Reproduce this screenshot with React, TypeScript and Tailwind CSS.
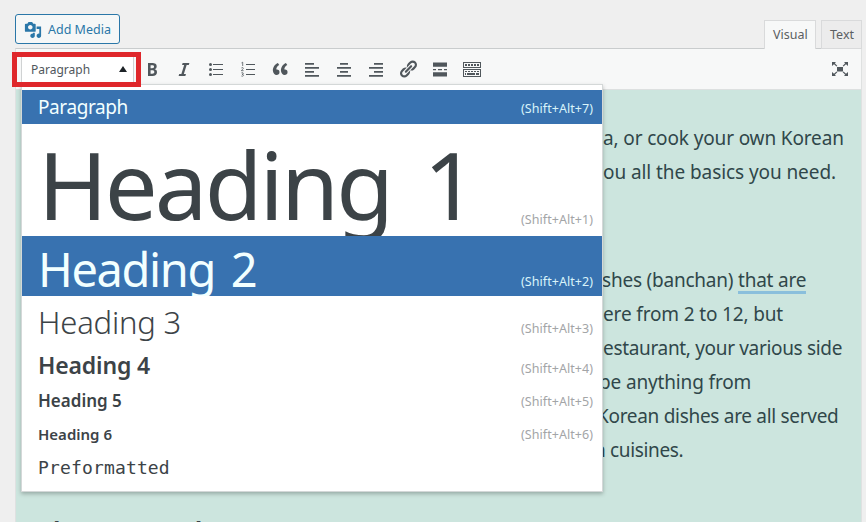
import type { ReactNode } from 'react';

interface FormatItem {
    label: string;
    shortcut?: string;
    row: string;
    text: string;
    hint: string;
    active?: boolean;
}

const formats: FormatItem[] = [
    { label: 'Paragraph', shortcut: '(Shift+Alt+7)', row: 'h-[34px]', text: 'text-[19px] leading-[34px] tracking-[-0.4px]', hint: 'pt-[10px]', active: true },
    { label: 'Heading 1', shortcut: '(Shift+Alt+1)', row: 'h-[112px]', text: 'text-[94px] leading-[120px] tracking-[-2.9px] [word-spacing:11px]', hint: 'pt-[87px]' },
    { label: 'Heading 2', shortcut: '(Shift+Alt+2)', row: 'h-[60px]', text: 'text-[47px] leading-[67px] tracking-[-1.4px] [word-spacing:5px]', hint: 'pt-[37px]', active: true },
    { label: 'Heading 3', shortcut: '(Shift+Alt+3)', row: 'h-[51px]', text: 'text-[31px] leading-[52px] font-[350] tracking-[-0.2px]', hint: 'pt-[24px]' },
    { label: 'Heading 4', shortcut: '(Shift+Alt+4)', row: 'h-[37px]', text: 'text-[23px] leading-[36px] font-semibold tracking-[-0.15px]', hint: 'pt-[13px]' },
    { label: 'Heading 5', shortcut: '(Shift+Alt+5)', row: 'h-[33px]', text: 'text-[17px] leading-[34px] font-semibold tracking-[0px]', hint: 'pt-[9px]' },
    { label: 'Heading 6', shortcut: '(Shift+Alt+6)', row: 'h-[33px]', text: 'text-[15px] leading-[34px] font-semibold tracking-[0px]', hint: 'pt-[9px]' },
    { label: 'Preformatted', row: 'h-[34px]', text: "text-[18px] leading-[35px] font-['DejaVu_Sans_Mono',monospace] tracking-[0.15px]", hint: '' },
];

const Icon = ({ children, className = 'size-5' }: { children: ReactNode; className?: string }) => (
    <svg viewBox="0 0 20 20" fill="currentColor" className={className}>{children}</svg>
);

const toolbarIcons: ReactNode[] = [
    <path d="M6 4v13h4.54c1.37 0 2.46-.33 3.26-1 .8-.66 1.2-1.58 1.2-2.77 0-.84-.17-1.51-.51-2.01s-.9-.85-1.67-1.03v-.09c.57-.1 1.02-.4 1.36-.9s.51-1.13.51-1.91c0-1.14-.39-1.98-1.17-2.5C12.75 4.26 11.5 4 9.78 4H6zm2.57 5.15V6.26h1.36c.73 0 1.27.11 1.61.32.34.22.51.58.51 1.07 0 .54-.16.92-.47 1.15s-.82.35-1.51.35h-1.5zm0 2.19h1.6c1.44 0 2.16.53 2.16 1.61 0 .6-.17 1.05-.51 1.34s-.86.43-1.57.43H8.57v-3.38z" />,
    <path d="M14.78 6h-2.13l-2.8 9h2.12l-.62 2H4.6l.62-2h2.14l2.8-9H8.03l.62-2h6.75z" />,
    <g>
        <circle cx="4.5" cy="5.5" r="1.5" />
        <circle cx="4.5" cy="10.5" r="1.5" />
        <circle cx="4.5" cy="15.5" r="1.5" />
        <path d="M7 5h10v1H7zM7 10h10v1H7zM7 15h10v1H7z" />
    </g>,
    <g>
        <path d="M8 5h9v1H8zM8 10h9v1H8zM8 15h9v1H8z" />
        <path fill="none" stroke="currentColor" strokeWidth=".8" d="M3.5 3.9l1.2-.7V7M3.4 9c.6-.7 2-.6 1.9.4 0 .8-1.9 1.5-1.9 2.3h2.2M3.4 13.9c1-.5 1.9-.2 1.9.5 0 .6-.6.9-1.2.9.8 0 1.4.3 1.4 1s-1.1 1.2-2.1.7" />
    </g>,
    <path d="M9.49 13.22c0-.74-.2-1.38-.61-1.9-.62-.78-1.83-.88-2.53-.72-.29-1.65 1.11-3.75 2.92-4.65L7.88 4c-2.73 1.3-5.42 4.28-4.96 8.05C3.21 14.43 4.59 16 6.54 16c.85 0 1.56-.25 2.12-.75s.83-1.18.83-2.03zm8.05 0c0-.74-.2-1.38-.61-1.9-.63-.78-1.83-.88-2.53-.72-.29-1.65 1.11-3.75 2.92-4.65L15.93 4c-2.73 1.3-5.41 4.28-4.95 8.05.29 2.38 1.66 3.95 3.61 3.95.85 0 1.56-.25 2.12-.75s.83-1.18.83-2.03z" />,
    <path d="M3 4h9v1.7H3zM3 8h14v1.7H3zM3 12h9v1.7H3zM3 16h14v1.7H3z" />,
    <path d="M6 4h8v1.7H6zM3 8h14v1.7H3zM6 12h8v1.7H6zM3 16h14v1.7H3z" />,
    <path d="M8 4h9v1.7H8zM3 8h14v1.7H3zM8 12h9v1.7H8zM3 16h14v1.7H3z" />,
    <path d="M17.74 2.76c1.68 1.69 1.68 4.41 0 6.1l-1.53 1.52c-1.12 1.12-2.7 1.47-4.14 1.09l2.62-2.61.76-.77.76-.76c.84-.84.84-2.2 0-3.04-.84-.85-2.2-.85-3.04 0l-.77.76-3.38 3.38c-.37-1.44-.02-3.02 1.1-4.14l1.52-1.53c1.69-1.68 4.42-1.68 6.1 0zM8.59 13.43l5.34-5.34c.42-.42.42-1.1 0-1.52-.44-.43-1.13-.39-1.53 0l-5.33 5.34c-.42.42-.42 1.1 0 1.52.44.43 1.13.39 1.52 0zm-.76 2.29l4.14-4.15c.38 1.44.03 3.02-1.09 4.14l-1.52 1.53c-1.69 1.68-4.41 1.68-6.1 0-1.68-1.68-1.68-4.42 0-6.1l1.53-1.52c1.12-1.12 2.7-1.47 4.14-1.1l-4.14 4.15c-.85.84-.85 2.2 0 3.05.84.84 2.2.84 3.04 0z" />,
    <path d="M3 3.5h14v4.3H3zM3 10h3v1.3H3zM8 10h4v1.3H8zM14 10h3v1.3h-3zM3 13.2h14v4.3H3z" />,
    <path fillRule="evenodd" d="M1 3h18v6H1zM2 4v4h16V4zM1 10h18v8H1zM2 11v6h16v-6zM3 5h2v2H3zM6 5h2v2H6zM9 5h2v2H9zM12 5h2v2h-2zM15 5h2v2h-2zM3 12h2v1H3zM6 12h2v1H6zM9 12h2v1H9zM12 12h2v1h-2zM15 12h2v1h-2zM3 14h1v2H3zM5 14h8v2H5zM14 14h3v2h-3z" />,
];

const lines = [
    { text: 'a, or cook your own Korean', box: 'mt-[31px]', cls: 'tracking-[-0.14px]' },
    { text: 'ou all the basics you need.', box: '', cls: 'tracking-[-0.08px]' },
    { text: 'shes (banchan) ', marked: 'that are', box: 'mt-[74px]', cls: '-ml-px tracking-[-0.22px]' },
    { text: 'ere from 2 to 12, but', box: '', cls: 'tracking-[-0.15px]' },
    { text: 'estaurant, your various side', box: '', cls: 'tracking-[-0.33px]' },
    { text: 'be anything from', box: '', cls: '-ml-1 tracking-[-0.15px]' },
    { text: 'Korean dishes are all served', box: '', cls: '-ml-1.5 tracking-[-0.3px]' },
    { text: 'n cuisines.', box: '', cls: '-ml-[9px] tracking-[-0.35px]' },
];

const FormatMenu = () => (
    <div className="absolute left-[21px] top-[84px] z-10 flex h-[408px] w-[582px] flex-col border border-[#d4d8d8] bg-white pt-[5px] shadow-[0_2px_4px_rgba(0,0,0,0.25)]">
        {formats.map((f) => (
            <div
                key={f.label}
                className={`flex shrink-0 justify-between overflow-hidden pl-4 pr-[9px] ${f.row} ${f.active ? 'bg-[#3872b0] text-[#f2ffff]' : 'text-[#3c4347]'}`}
            >
                <span className={`whitespace-pre ${f.text}`}>{f.label}</span>
                {f.shortcut && (
                    <span className={`text-[12.5px] leading-[18px] tracking-[0.05px] ${f.hint} ${f.active ? 'text-[#d8f4fa]' : 'text-[#a3a5a7]'}`}>{f.shortcut}</span>
                )}
            </div>
        ))}
    </div>
);

export default function App() {
    return (
        <div className="relative flex h-[522px] w-[866px] flex-col overflow-hidden bg-[#efefef] font-['Noto_Sans','Open_Sans',sans-serif] text-[#3c4347]">
            <div className="flex h-12 shrink-0 justify-between pl-[15px] pr-[4px]">
                <button className="mt-3.5 flex h-[30px] w-[105px] items-center rounded-[3px] border border-[#2a77a8] bg-[#f5f7f7] pl-[8px] text-[#2a77a8]">
                    <Icon className="mr-[6px] mt-0.5 size-[18px]">
                        <path d="M13 11V4c0-.55-.45-1-1-1h-1.67L9 1H5L3.67 3H2c-.55 0-1 .45-1 1v7c0 .55.45 1 1 1h10c.55 0 1-.45 1-1zM7 4.5c1.38 0 2.5 1.12 2.5 2.5S8.38 9.5 7 9.5 4.5 8.38 4.5 7 5.62 4.5 7 4.5zM14 6h5v10.5c0 1.38-1.12 2.5-2.5 2.5S14 17.88 14 16.5s1.12-2.5 2.5-2.5c.17 0 .34.02.5.05V9h-3V6zm-4 8.05V13h2v3.5c0 1.38-1.12 2.5-2.5 2.5S7 17.88 7 16.5 8.12 14 9.5 14c.17 0 .34.02.5.05z" />
                    </Icon>
                    <span className="mt-0.5 whitespace-nowrap text-[12.5px]">Add Media</span>
                </button>
                <div className="relative z-[1] mt-5 flex gap-[5px] text-[12.5px] text-[#5b5f62]">
                    <div className="h-[29px] w-[52px] border border-b-0 border-[#d9dadb] bg-[#f7f8f8] pl-2 leading-[27px]">Visual</div>
                    <div className="h-[29px] w-[41px] border border-[#d9dadb] bg-[#ececec] pl-2 leading-[27px]">Text</div>
                </div>
            </div>

            <div className="ml-[15px] flex w-[847px] grow flex-col border-x border-t border-[#c9cccd] border-x-[#dfe1e1]">
                <div className="flex h-[41px] shrink-0 items-center border-b border-[#dde0e0] bg-[#f7f8f8] text-[#50575c]">
                    <div className="ml-[5px] flex h-7 w-[113px] items-center justify-between border border-[#d0d2d3] bg-white pl-[9px] pr-[6px]">
                        <span className="mt-0.5 text-[12px]">Paragraph</span>
                        <svg viewBox="0 0 8 6" className="h-1.5 w-2" fill="#1d2327"><path d="M4 0l4 6H0z" /></svg>
                    </div>
                    <div className="ml-[8px] flex gap-3">
                        {toolbarIcons.map((icon, i) => <Icon key={i}>{icon}</Icon>)}
                    </div>
                    <Icon className="ml-auto mr-[11px] size-5">
                        <path d="M7 8h6v4.5H7zM2 3h4L4.8 4.2 7.3 6.7l-.8.8L4 5.2 2 7zM18 3h-4l1.2 1.2-2.5 2.5.8.8L16 5.2 18 7zM2 17h4l-1.2-1.2 2.5-2.5-.8-.8L4 14.8 2 13zM18 17h-4l1.2-1.2-2.5-2.5.8-.8 2.5 2.3L18 13z" />
                    </Icon>
                </div>
                <div className="grow bg-[#cce5de] pl-[587px] text-[19px] text-[#30474a]">
                    {lines.map((l) => (
                        <p key={l.text} className={`h-[34px] whitespace-pre leading-[34px] ${l.box} ${l.cls}`}>
                            {l.text}
                            {l.marked && <span className="inline-block h-[31px] border-b-[3px] border-[#8abfdc]">{l.marked}</span>}
                        </p>
                    ))}
                </div>
            </div>

            <h2 className="absolute left-[26px] top-[513px] whitespace-pre text-[28px] font-semibold leading-[38px]">Where Bread</h2>

            <FormatMenu />
            <div className="absolute left-3 top-[52px] z-20 h-[35px] w-[129px] border-[5px] border-[#df272b]" />
        </div>
    );
}
